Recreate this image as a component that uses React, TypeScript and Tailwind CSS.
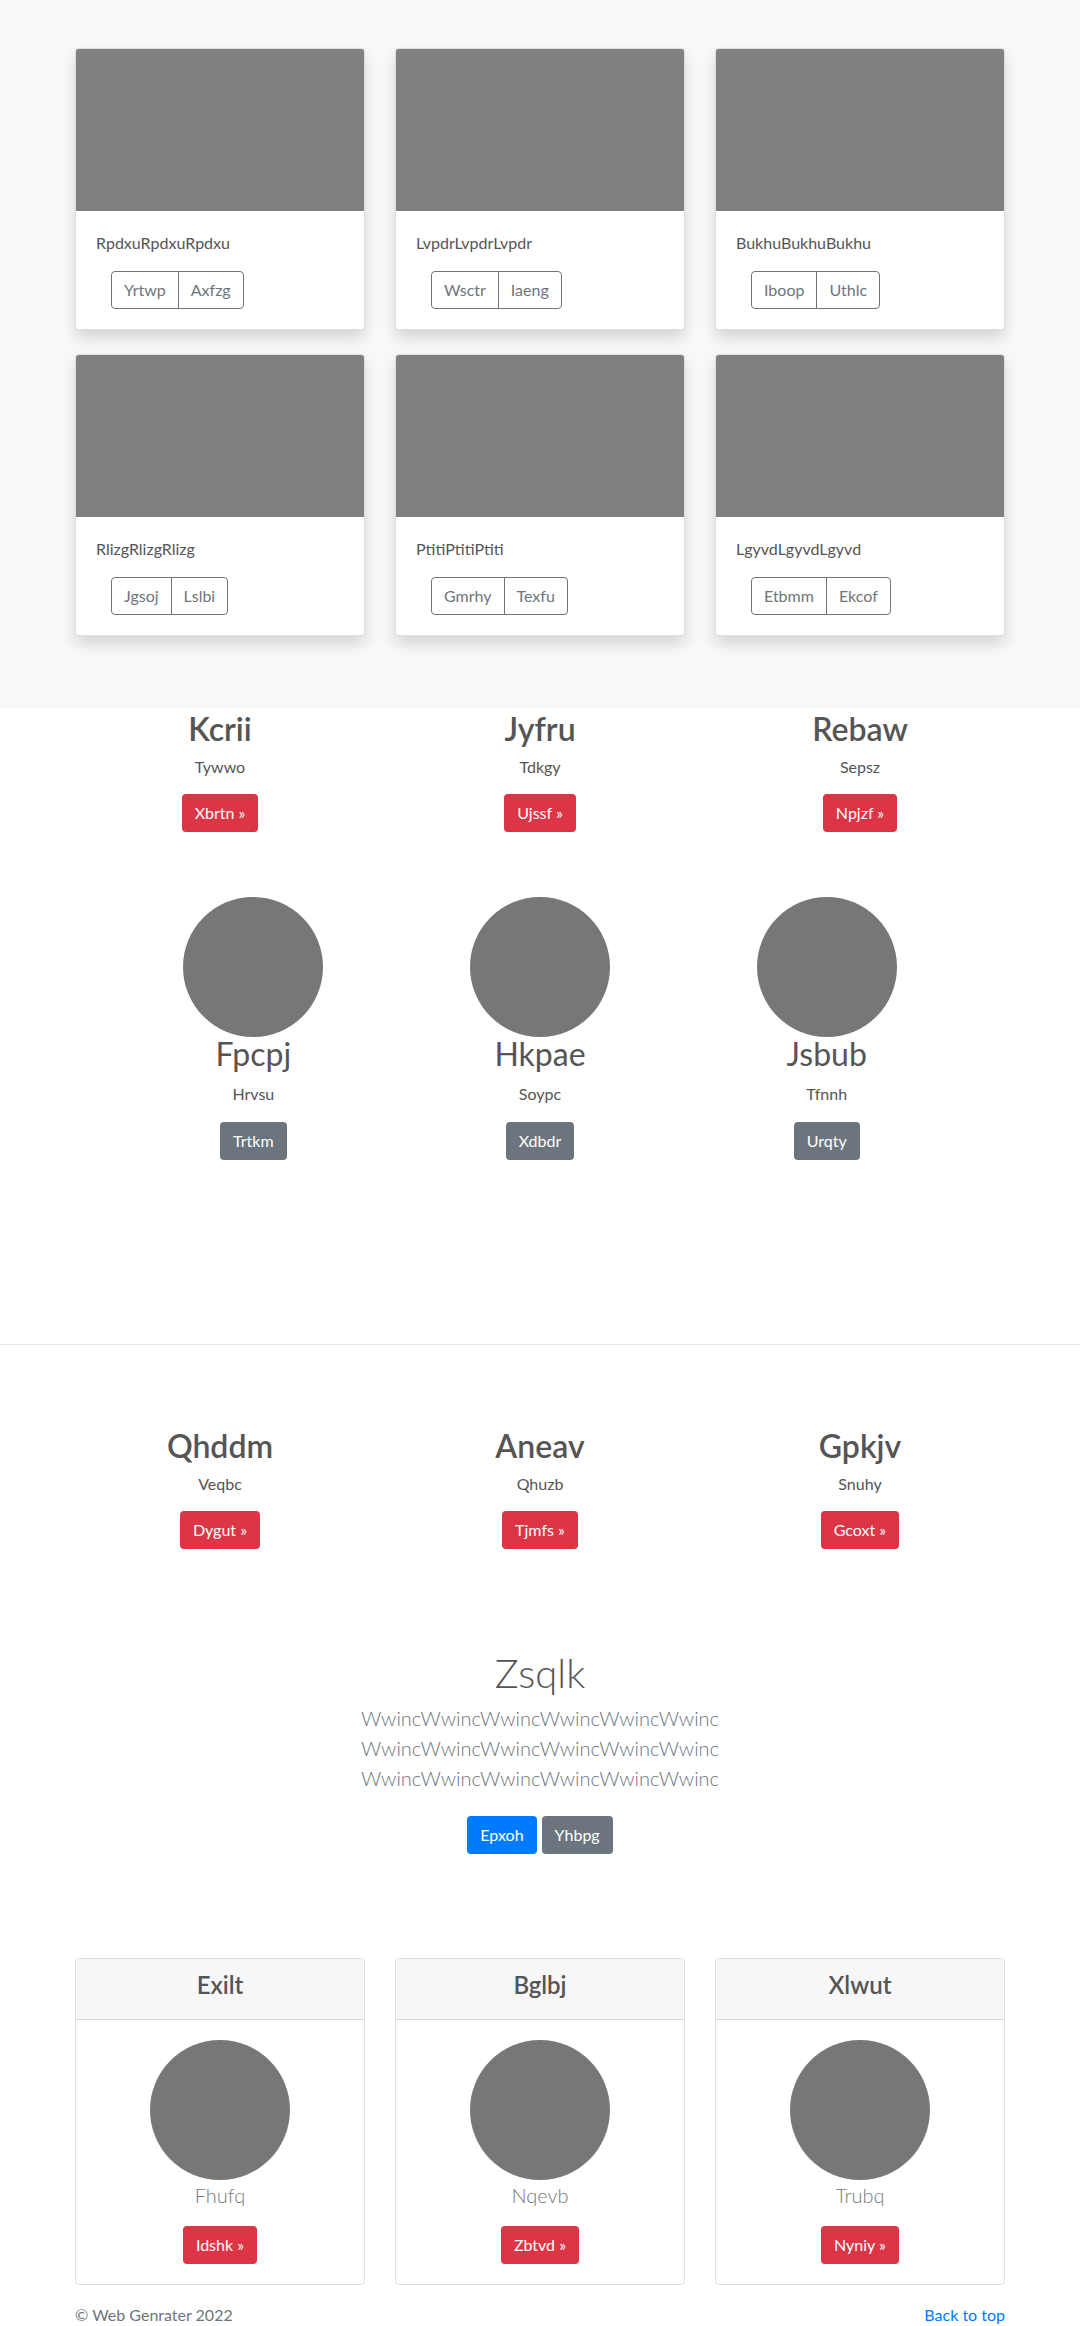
const font = { fontFamily: 'Lato, "Noto Sans", Arial, sans-serif' };

const albumCards = [
  { text: 'RpdxuRpdxuRpdxu', a: 'Yrtwp', b: 'Axfzg' },
  { text: 'LvpdrLvpdrLvpdr', a: 'Wsctr', b: 'Iaeng' },
  { text: 'BukhuBukhuBukhu', a: 'Iboop', b: 'Uthlc' },
  { text: 'RlizgRlizgRlizg', a: 'Jgsoj', b: 'Lslbi' },
  { text: 'PtitiPtitiPtiti', a: 'Gmrhy', b: 'Texfu' },
  { text: 'LgyvdLgyvdLgyvd', a: 'Etbmm', b: 'Ekcof' },
];

const teasersTop = [
  { title: 'Kcrii', sub: 'Tywwo', btn: 'Xbrtn' },
  { title: 'Jyfru', sub: 'Tdkgy', btn: 'Ujssf' },
  { title: 'Rebaw', sub: 'Sepsz', btn: 'Npjzf' },
];

const marketing = [
  { title: 'Fpcpj', sub: 'Hrvsu', btn: 'Trtkm' },
  { title: 'Hkpae', sub: 'Soypc', btn: 'Xdbdr' },
  { title: 'Jsbub', sub: 'Tfnnh', btn: 'Urqty' },
];

const teasersBottom = [
  { title: 'Qhddm', sub: 'Veqbc', btn: 'Dygut' },
  { title: 'Aneav', sub: 'Qhuzb', btn: 'Tjmfs' },
  { title: 'Gpkjv', sub: 'Snuhy', btn: 'Gcoxt' },
];

const profileCards = [
  { title: 'Exilt', name: 'Fhufq', btn: 'Idshk' },
  { title: 'Bglbj', name: 'Nqevb', btn: 'Zbtvd' },
  { title: 'Xlwut', name: 'Trubq', btn: 'Nyniy' },
];

const btn = 'inline-block px-3 py-[6px] text-base leading-6 rounded text-white border border-transparent';

function Teaser({ title, sub, btn: label }: { title: string; sub: string; btn: string }) {
  return (
    <div className="flex flex-col items-center text-center">
      <h2 className="text-[32px] leading-[1.2] font-semibold text-[#555] mb-[7px]">{title}</h2>
      <p className="text-base leading-6 text-[#555] mb-[15px]">{sub}</p>
      <a className={`${btn} bg-[#dc3545]`}>{label} &raquo;</a>
    </div>
  );
}

export default function App() {
  return (
    <div style={font} className="bg-white text-[#555]">
      {/* album */}
      <section className="bg-[#f8f9fa] pt-12 pb-[72px]">
        <div className="w-[960px] mx-auto px-[15px] grid grid-cols-3 gap-x-[30px] gap-y-6">
          {albumCards.map((c) => (
            <div
              key={c.text}
              className="bg-white rounded border border-black/[0.125] overflow-hidden shadow-[0_8px_16px_rgba(0,0,0,0.15)]"
            >
              <div className="h-[162px] bg-[#808080]" />
              <div className="p-5">
                <p className="text-base leading-6 text-[#555] mb-4">{c.text}</p>
                <div className="ml-[15px] flex">
                  <button className="px-3 py-[6px] text-base leading-6 text-[#6c757d] border border-[#6c757d] rounded-l">
                    {c.a}
                  </button>
                  <button className="-ml-px px-3 py-[6px] text-base leading-6 text-[#6c757d] border border-[#6c757d] rounded-r">
                    {c.b}
                  </button>
                </div>
              </div>
            </div>
          ))}
        </div>
      </section>

      {/* teasers */}
      <div className="w-[960px] mx-auto grid grid-cols-3 pt-[2px]">
        {teasersTop.map((t) => (
          <Teaser key={t.title} {...t} />
        ))}
      </div>

      {/* marketing circles */}
      <div className="w-[860px] mx-auto grid grid-cols-3 mt-[65px]">
        {marketing.map((m) => (
          <div key={m.title} className="flex flex-col items-center text-center">
            <div className="w-[140px] h-[140px] rounded-full bg-[#777]" />
            <h2 className="text-[32px] leading-[1.2] font-normal text-[#555] -mt-[2px]">{m.title}</h2>
            <p className="text-base leading-6 text-[#555] mt-2 mb-4">{m.sub}</p>
            <a className={`${btn} bg-[#6c757d]`}>{m.btn}</a>
          </div>
        ))}
      </div>

      <hr className="mt-[184px] border-0 border-t border-[#e5e5e5]" />

      <div className="w-[960px] mx-auto grid grid-cols-3 mt-[82px]">
        {teasersBottom.map((t) => (
          <Teaser key={t.title} {...t} />
        ))}
      </div>

      {/* jumbotron */}
      <section className="text-center mt-[100px] pb-2">
        <h1 className="text-[40px] leading-[1.2] font-light text-[#555] mb-[6px]">Zsqlk</h1>
        <p className="max-w-[360px] mx-auto text-xl leading-[30px] font-light text-[#6c757d] mb-4">
          WwincWwincWwincWwincWwincWwinc WwincWwincWwincWwincWwincWwinc WwincWwincWwincWwincWwincWwinc
        </p>
        <div className="flex justify-center gap-[5px] pt-[7px]">
          <a className={`${btn} bg-[#007bff]`}>Epxoh</a>
          <a className={`${btn} bg-[#6c757d]`}>Yhbpg</a>
        </div>
      </section>

      {/* profile cards */}
      <div className="w-[960px] mx-auto px-[15px] grid grid-cols-3 gap-x-[30px] mt-[96px]">
        {profileCards.map((p) => (
          <div key={p.title} className="rounded border border-black/[0.125] overflow-hidden text-center">
            <div className="bg-[#f7f7f7] border-b border-black/[0.125] px-5 pt-3 pb-3">
              <h4 className="text-2xl leading-[1.2] font-semibold text-[#555] mb-[7px]">{p.title}</h4>
            </div>
            <div className="p-5 flex flex-col items-center">
              <div className="w-[140px] h-[140px] rounded-full bg-[#777]" />
              <p className="text-xl leading-[30px] font-light text-[#777] mb-4">{p.name}</p>
              <a className={`${btn} bg-[#dc3545]`}>{p.btn} &raquo;</a>
            </div>
          </div>
        ))}
      </div>

      <footer className="w-[960px] mx-auto px-[15px] flex justify-between pt-[18px] pb-6 text-base leading-6">
        <span className="text-[#6c757d]">&copy; Web Genrater 2022</span>
        <a className="text-[#007bff]">Back to top</a>
      </footer>
    </div>
  );
}
